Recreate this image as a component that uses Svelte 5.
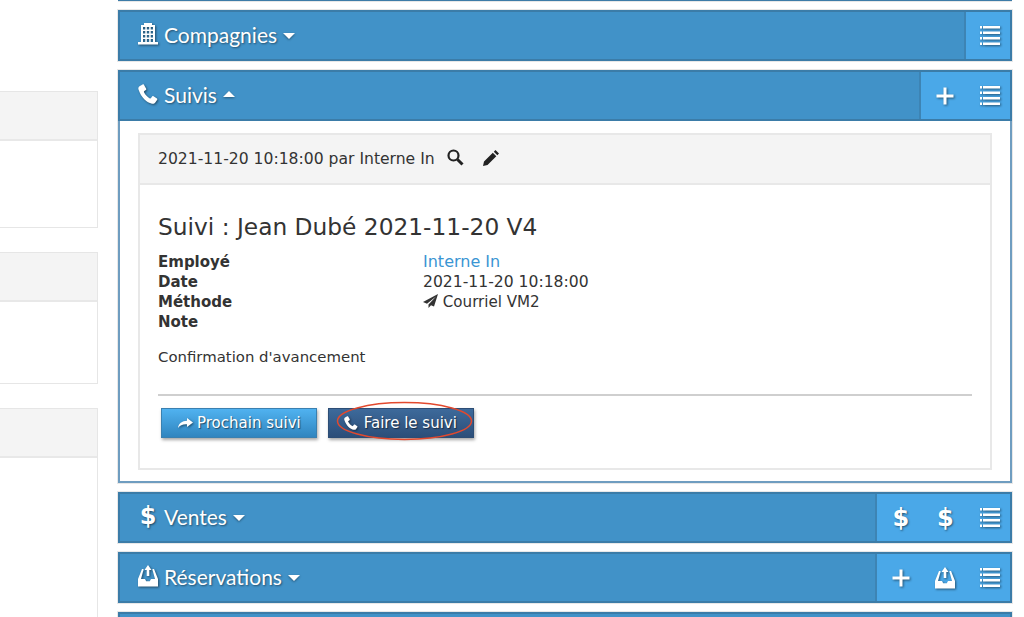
<script>
const fields = [
	{label: 'Employé', value: 'Interne In', link: true},
	{label: 'Date', value: '2021-11-20 10:18:00'},
	{label: 'Méthode', value: 'Courriel VM2', send: true},
	{label: 'Note', value: ''},
]

const sideCards = [{body: 86}, {body: 81}, {body: 160}]
</script>

{#snippet list()}
	<svg class="icon" width="20" height="20" viewBox="0 0 20 20" fill="#fff">
		<path d="M0 0h2v2.500H0zM3 0h17v2.500H3zM0 5.500h2V8H0zM3 5.500h17V8H3zM0 11h2v2.500H0zM3 11h17v2.500H3zM0 16.500h2V19H0zM3 16.500h17V19H3z" />
	</svg>
{/snippet}

{#snippet plus()}
	<svg class="icon" width="18" height="18" viewBox="0 0 18 18" fill="#fff">
		<path d="M7.500 0.500h3v7h7v3h-7v7h-3v-7h-7v-3h7z" />
	</svg>
{/snippet}

{#snippet phone(size)}
	<svg class="icon" width={size} height={size} viewBox="0 0 20 20" fill="#fff">
		<path d="M4.600 0.400 1.500 2.300C.4 3 .1 4.300.5 5.600c1.300 4 3.300 7.300 6 10 2.200 2.200 4.700 3.500 7.500 4.100 1.300.3 2.600-.1 3.300-1.200l1.900-2.700c.3-.5.200-1-.2-1.300l-3.500-2.300c-.5-.3-1-.2-1.300.2l-1.200 1.700c-.3.400-.7.500-1.100.3-2.500-1.400-4.500-3.500-5.900-6.200-.2-.4-.1-.8.300-1.100l1.600-1.100c.4-.3.500-.9.300-1.300L5.900.700C5.600.2 5 .1 4.600.400z" />
	</svg>
{/snippet}

{#snippet tray()}
	<svg class="icon" width="20" height="22" viewBox="0 0 20 22" fill="#fff">
		<path d="M4 4h1.500v1.500H5.300L3 14h4l1.200 2.200h3.600L13 14h4L14.700 5.500h-.2V4H16l4 10v7.500H0V14z" />
		<path d="M10 0l3.500 5h-2.200v6H8.700V5H6.500z" />
	</svg>
{/snippet}

{#snippet building()}
	<svg class="icon" width="20" height="22" viewBox="0 0 20 22" fill="#fff">
		<path fill-rule="evenodd" d="M6 0h8v2h3v17h3v2.500H0V19h3V2h3zM5 4v2.500h2.300V4zM8.800 4v2.500h2.400V4zM12.700 4v2.500H15V4zM5 8v2.500h2.300V8zM8.800 8v2.500h2.400V8zM12.700 8v2.500H15V8zM5 12v2.500h2.300V12zM8.800 12v2.500h2.400V12zM12.700 12v2.500H15V12zM5 16v3h2.300v-3zM8.800 16v3h2.400v-3zM12.700 16v3H15v-3z" />
	</svg>
{/snippet}

{#snippet caret(up)}
	<span class="caret" class:up></span>
{/snippet}

<div class="page">
	<aside class="side">
		{#each sideCards as card}
			<div class="side-card">
				<div class="side-head"></div>
				<div style={`height:${card.body}px`}></div>
			</div>
		{/each}
	</aside>

	<main class="main">
		<div class="panel stub"></div>

		<section class="panel">
			<header class="bar">
				<h2>{@render building()}<span>Compagnies</span>{@render caret(false)}</h2>
				<div class="actions"><button>{@render list()}</button></div>
			</header>
		</section>

		<section class="panel">
			<header class="bar">
				<h2>{@render phone(20)}<span>Suivis</span>{@render caret(true)}</h2>
				<div class="actions">
					<button>{@render plus()}</button>
					<button>{@render list()}</button>
				</div>
			</header>
			<div class="panel-body">
				<div class="card">
					<div class="card-head">
						<span>2021-11-20 10:18:00 par Interne In</span>
						<svg class="tool" width="17" height="17" viewBox="0 0 17 17" fill="none" stroke="#222">
							<circle cx="6.500" cy="6.500" r="5" stroke-width="2.200" />
							<path d="M10.500 10.500l5 5" stroke-width="3" />
						</svg>
						<svg class="tool" width="18" height="18" viewBox="0 0 18 18" fill="#222">
							<path d="M13.500 1l3.500 3.500-1.700 1.700-3.500-3.500zM10.800 3.700l3.500 3.500-8.800 8.800L1 17l1-4.500z" />
						</svg>
					</div>
					<div class="card-body">
						<h3>Suivi : Jean Dubé 2021-11-20 V4</h3>
						<dl>
							{#each fields as f}
								<dt>{f.label}</dt>
								<dd class:narrow={f.send}>
									{#if f.link}
										<a href="#suivi">{f.value}</a>
									{:else}
										{#if f.send}
											<svg class="send" width="15" height="14" viewBox="0 0 15 14" fill="#333">
												<path d="M15 0 0 8l4 1.800L13 2.500 5.500 10.600V14l2.500-2.700 3 1.300z" />
											</svg>
										{/if}
										{f.value}
									{/if}
								</dd>
							{/each}
						</dl>
						<p>Confirmation d'avancement</p>
						<hr />
						<div class="buttons">
							<button class="btn">
								<svg class="icon" width="16" height="10" viewBox="0 0 16 10" fill="#fff">
									<path d="M10 0l6 4.500L10 9V6.300C6 6 3 7 1 10 1.500 5.500 5 2.800 10 2.700z" />
								</svg>
								Prochain suivi
							</button>
							<button class="btn dark">
								{@render phone(14)}
								Faire le suivi
								<svg class="oval" width="137" height="40" viewBox="0 0 137 40" fill="none" stroke="#e2492e" stroke-width="1.500">
									<ellipse cx="68.500" cy="20" rx="67" ry="18.500" />
								</svg>
							</button>
						</div>
					</div>
				</div>
			</div>
		</section>

		<section class="panel">
			<header class="bar">
				<h2><span class="dollar lead">$</span><span>Ventes</span>{@render caret(false)}</h2>
				<div class="actions">
					<button><span class="dollar">$</span></button>
					<button><span class="dollar">$</span></button>
					<button>{@render list()}</button>
				</div>
			</header>
		</section>

		<section class="panel">
			<header class="bar">
				<h2>{@render tray()}<span>Réservations</span>{@render caret(false)}</h2>
				<div class="actions">
					<button>{@render plus()}</button>
					<button>{@render tray()}</button>
					<button>{@render list()}</button>
				</div>
			</header>
		</section>

		<section class="panel">
			<header class="bar"></header>
		</section>
	</main>
</div>

<style>
:global(body) {
	margin: 0;
	background: #fff;
	overflow: hidden;
}

.page {
	display: flex;
	gap: 20px;
	height: 617px;
	overflow: hidden;
	padding-right: 12px;
	font-family: "DejaVu Sans", Verdana, sans-serif;
	font-size: 15.600px;
	color: #333;
}

.side {
	flex: 0 0 98px;
	display: flex;
	flex-direction: column;
	gap: 24px;
	padding-top: 91px;
}

.side-card {
	flex: 0 0 auto;
	border: 1px solid #e6e6e6;
	border-left: 0;
}

.side-head {
	height: 47px;
	background: #f4f4f4;
	border-bottom: 2px solid #e8e8e8;
}

.main {
	flex: 1;
	min-width: 0;
	display: flex;
	flex-direction: column;
	gap: 7px;
}

.panel {
	flex: 0 0 auto;
	box-sizing: border-box;
	margin: 0 -1px;
	border: 1px solid #e8e8e8;
}

.stub {
	height: 2px;
	border: 0;
	border-top: 1px solid #3d7ca8;
	border-bottom: 1px solid #e8e8e8;
	margin: 0;
}

.bar {
	box-sizing: border-box;
	height: 51px;
	display: flex;
	justify-content: space-between;
	background: #4192c8;
	border: 2px solid #3b7ca8;
}

h2 {
	margin: 0 0 3px;
	padding-left: 18px;
	display: flex;
	align-items: center;
	gap: 6px;
	font-family: Lato, "Open Sans", sans-serif;
	font-size: 21px;
	font-weight: 400;
	color: #fff;
	text-shadow: 1px 1px 2px rgba(0, 0, 0, 0.45);
}

.caret {
	width: 0;
	height: 0;
	margin-top: 3px;
	border: 6px solid transparent;
	border-bottom-width: 0;
	border-top-color: #fff;
	filter: drop-shadow(0 1px 1px rgba(0, 0, 0, 0.4));
}

.caret.up {
	margin-top: 0;
	border-top-width: 0;
	border-bottom-width: 6px;
	border-top-color: transparent;
	border-bottom-color: #fff;
}

.actions {
	display: flex;
	margin-right: -2px;
	padding-left: 2px;
	background: #4aa8e8;
	border-left: 2px solid #3d84b4;
	box-shadow: inset -2px 0 0 #3b7ca8;
}

.actions button {
	width: 44.500px;
	padding: 0;
	border: 0;
	background: none;
	display: flex;
	align-items: center;
	justify-content: center;
}

.icon {
	flex: none;
	filter: drop-shadow(1px 1px 1px rgba(0, 0, 0, 0.5));
}

.dollar {
	font-family: "DejaVu Sans", sans-serif;
	font-size: 24px;
	font-weight: 700;
	color: #fff;
	text-shadow: 1px 1px 2px rgba(0, 0, 0, 0.5);
}

.dollar.lead {
	width: 20px;
	text-align: center;
}

.panel-body {
	box-sizing: border-box;
	height: 362px;
	padding: 12px 18px 11px;
	border: 2px solid #6f9dc0;
	border-top: 0;
}

.card {
	height: 100%;
	box-sizing: border-box;
	border: 2px solid #e8e8e8;
}

.card-head {
	height: 48px;
	display: flex;
	align-items: center;
	padding-left: 18px;
	background: #f4f4f4;
	border-bottom: 2px solid #e8e8e8;
}

.tool {
	margin-left: 12px;
	margin-bottom: 3px;
}

.tool + .tool {
	margin-left: 18px;
}

.card-body {
	padding: 27px 18px 0;
}

h3 {
	margin: 0 0 10px;
	font-size: 23.300px;
	line-height: 30px;
	font-weight: 400;
	color: #333;
}

dl {
	display: grid;
	grid-template-columns: 265px 1fr;
	margin: 0;
	line-height: 20px;
}

dt {
	font-size: 15px;
	font-weight: 700;
}

dd {
	margin: 0;
	min-height: 20px;
}

dd.narrow {
	font-size: 15.100px;
}

dd a {
	font-size: 16px;
	color: #3a95d3;
	text-decoration: none;
}

.send {
	vertical-align: -1px;
}

p {
	margin: 15px 0 0;
	font-size: 14.900px;
	line-height: 20px;
}

hr {
	margin: 27px 0 0;
	border: 0;
	border-top: 2px solid #cfcfcf;
}

.buttons {
	display: flex;
	gap: 11px;
	margin: 12px 0 0 3px;
}

.btn {
	position: relative;
	height: 30px;
	display: flex;
	align-items: center;
	gap: 4px;
	padding: 0 15px;
	border: 1px solid #3a80b0;
	background: linear-gradient(#50b2f0, #3085bf);
	font-family: "DejaVu Sans", Verdana, sans-serif;
	font-size: 15px;
	color: #fff;
	text-shadow: 1px 1px 1px rgba(0, 0, 0, 0.5);
	box-shadow: 1px 2px 3px rgba(0, 0, 0, 0.35);
}

.btn.dark {
	gap: 6px;
	padding-right: 16px;
	border-color: #2c4d75;
	background: linear-gradient(#3d6a9b, #2c4e79);
}

.oval {
	position: absolute;
	left: 7px;
	top: -8px;
}
</style>
